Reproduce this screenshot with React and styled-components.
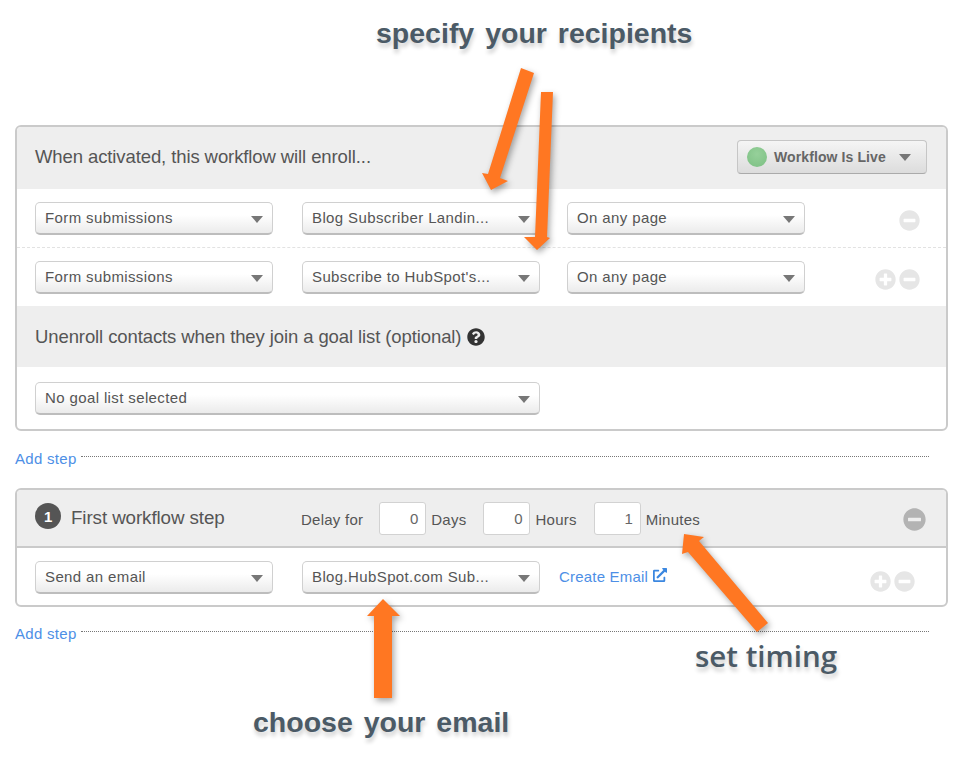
import React from 'react'
import styled, { createGlobalStyle } from 'styled-components'
import { FaMinusCircle, FaPlusCircle, FaQuestionCircle, FaExternalLinkAlt } from 'react-icons/fa'

const GlobalStyle = createGlobalStyle`
  html, body {
    margin: 0;
    padding: 0;
    background: #fff;
  }
  body {
    font-family: "Liberation Sans", Arial, sans-serif;
    color: #555;
  }
`

const Page = styled.div`
  position: relative;
  width: 962px;
  height: 773px;
  padding: 125px 14px 0 15px;
  box-sizing: border-box;
  overflow: hidden;
`

const Card = styled.div`
  border: 2px solid #cacaca;
  border-radius: 6px;
  overflow: hidden;
  background: #fff;
`

const Band = styled.div`
  display: flex;
  align-items: center;
  justify-content: space-between;
  height: ${({ $height }) => $height}px;
  padding: 0 19px ${({ $bottom }) => $bottom ?? 2}px 18px;
  box-sizing: border-box;
  background: #eee;
  font-size: 18.5px;
  letter-spacing: -0.1px;
  color: #555;
`

const BandTitle = styled.div`
  display: flex;
  align-items: center;
  gap: 6px;
`

const LiveButton = styled.div`
  display: flex;
  align-items: center;
  width: 190px;
  height: 34px;
  padding: 0 15px 0 9px;
  box-sizing: border-box;
  border: 1px solid #c6c6c6;
  border-bottom-color: #aaa;
  border-radius: 4px;
  background: linear-gradient(#f5f5f5, #dcdcdc);
  font-size: 14px;
  font-weight: bold;
  letter-spacing: 0.1px;
  color: #666;
`

const LiveDot = styled.span`
  width: 20px;
  height: 20px;
  margin-right: 7px;
  border-radius: 50%;
  background: radial-gradient(circle at 50% 35%, #96d09a, #7cc083);
`

const Row = styled.div`
  display: grid;
  grid-template-columns: ${({ $columns }) => $columns || '267px 265px 238px 1fr'};
  align-items: center;
  padding: 13px 0 ${({ $bottom }) => $bottom || 12}px 18px;
  border-bottom: ${({ $divider }) => ($divider ? '1px dashed #e2e2e2' : 'none')};
  height: 33px;
  box-sizing: content-box;
`

const SingleRow = styled.div`
  padding: 15px 0 14px 18px;
`

const Dropdown = styled.div`
  position: relative;
  width: ${({ $width }) => $width || 238}px;
  height: 33px;
  padding: 0 28px 0 9px;
  box-sizing: border-box;
  border: 1px solid #d0d0d0;
  border-bottom: 2px solid #bdbdbd;
  border-radius: 5px;
  background: linear-gradient(#fff 40%, #ebebeb);
  font-size: 15px;
  line-height: 30px;
  letter-spacing: 0.38px;
  color: #555;
  white-space: nowrap;
  overflow: hidden;
`

const Caret = styled.span`
  display: inline-block;
  width: 0;
  height: 0;
  border-left: 6px solid transparent;
  border-right: 6px solid transparent;
  border-top: 7px solid #777;
`

const DropdownCaret = styled(Caret)`
  position: absolute;
  top: 13px;
  right: 9px;
`

const LiveCaret = styled(Caret)`
  margin-left: auto;
`

const RoundIcons = styled.div`
  display: flex;
  justify-content: flex-end;
  gap: 3px;
  margin-top: ${({ $drop }) => $drop}px;
  padding-right: ${({ $inset }) => $inset}px;
  color: #e6e6e6;
  font-size: 21px;
  line-height: 0;
`

const AddStep = styled.div`
  display: flex;
  align-items: center;
  height: 20px;
  margin: ${({ $top }) => $top}px 0 ${({ $bottom }) => $bottom}px;
  padding-right: 19px;
  font-size: 15px;
  letter-spacing: 0.3px;
  color: #4d8fe6;
`

const DottedLine = styled.span`
  flex: 1;
  margin: -4px 0 0 4px;
  border-top: 1px dotted #777;
`

const StepBadge = styled.span`
  display: flex;
  align-items: center;
  justify-content: center;
  width: 26px;
  height: 26px;
  margin: -4px 10px 0 0;
  border-radius: 50%;
  background: #555;
  color: #fff;
  font-size: 15px;
  font-weight: bold;
`

const StepHeader = styled(Band)`
  justify-content: flex-start;
  border-bottom: 2px solid #cacaca;
`

const StepTitle = styled.span`
  width: 230px;
  font-size: 18.8px;
`

const DelayLabel = styled.span`
  margin: 2px ${({ $gap }) => $gap || 0}px 0 0;
  font-size: 15px;
  letter-spacing: 0.25px;
`

const DelayInput = styled.span`
  width: 47px;
  height: 33px;
  margin-right: 5px;
  padding-right: 7px;
  box-sizing: border-box;
  border: 1px solid #d2d2d2;
  border-radius: 3px;
  background: #fff;
  font-size: 15px;
  line-height: 31px;
  text-align: right;
  color: #666;
`

const StepRemove = styled.span`
  margin: 2px 1px 0 auto;
  color: #b3b3b3;
  font-size: 23px;
  line-height: 0;
`

const CreateEmail = styled.a`
  display: flex;
  align-items: center;
  gap: 5px;
  margin-top: -2px;
  font-size: 15px;
  letter-spacing: 0.2px;
  color: #4d8fe6;
  svg {
    width: 14px;
    height: 14px;
    margin-top: -3px;
    color: #3b87e0;
  }
`

const ArrowLayer = styled.svg`
  position: absolute;
  top: 0;
  left: 0;
  pointer-events: none;
  filter: drop-shadow(2px 3px 3px rgba(0, 0, 0, 0.35));
`

const Callout = styled.div`
  position: absolute;
  left: ${({ $left }) => $left}px;
  top: ${({ $top }) => $top}px;
  font-size: ${({ $size }) => $size}px;
  font-weight: ${({ $weight }) => $weight || 'bold'};
  font-family: ${({ $font }) => $font || '"Liberation Sans", Arial, sans-serif'};
  word-spacing: ${({ $words }) => $words || 0}px;
  line-height: 1;
  white-space: nowrap;
  color: #4b5a66;
  text-shadow: 1px 4px 4px rgba(0, 0, 0, 0.2);
`

const arrows = [
  '521,68 534,73 500,178 508,181 491,190 482,173 488,174',
  '541,92 553,92 547,237 550,238 537,250 524,237 535,237',
  '768,623 757,632 688,552 682,554 684,534 704,537 699,541',
  '374,698 374,616 367,616 383,599 400,616 392,616 392,698',
]

function Select({ label, width }) {
  return (
    <Dropdown $width={width}>
      {label}
      <DropdownCaret />
    </Dropdown>
  )
}

export default function App() {
  return (
    <Page>
      <GlobalStyle />
      <Card>
        <Band $height={62}>
          <BandTitle>When activated, this workflow will enroll...</BandTitle>
          <LiveButton>
            <LiveDot />
            Workflow Is Live
            <LiveCaret />
          </LiveButton>
        </Band>
        <Row $divider>
          <Select label="Form submissions" />
          <Select label="Blog Subscriber Landin..." />
          <Select label="On any page" />
          <RoundIcons $inset={26} $drop={4}>
            <FaMinusCircle />
          </RoundIcons>
        </Row>
        <Row>
          <Select label="Form submissions" />
          <Select label="Subscribe to HubSpot's..." />
          <Select label="On any page" />
          <RoundIcons $inset={26} $drop={4}>
            <FaPlusCircle />
            <FaMinusCircle />
          </RoundIcons>
        </Row>
        <Band $height={61} $bottom={0}>
          <BandTitle>
            Unenroll contacts when they join a goal list (optional)
            <FaQuestionCircle color="#333" size={18} />
          </BandTitle>
        </Band>
        <SingleRow>
          <Select label="No goal list selected" width={505} />
        </SingleRow>
      </Card>
      <AddStep $top={17} $bottom={20}>
        Add step
        <DottedLine />
      </AddStep>
      <Card>
        <StepHeader $height={58} $bottom={0}>
          <StepBadge>1</StepBadge>
          <StepTitle>First workflow step</StepTitle>
          <DelayLabel $gap={16}>Delay for</DelayLabel>
          <DelayInput>0</DelayInput>
          <DelayLabel $gap={17}>Days</DelayLabel>
          <DelayInput>0</DelayInput>
          <DelayLabel $gap={17}>Hours</DelayLabel>
          <DelayInput>1</DelayInput>
          <DelayLabel>Minutes</DelayLabel>
          <StepRemove>
            <FaMinusCircle />
          </StepRemove>
        </StepHeader>
        <Row $columns="267px 257px auto 1fr" $bottom={11}>
          <Select label="Send an email" />
          <Select label="Blog.HubSpot.com Sub..." />
          <CreateEmail>
            Create Email
            <FaExternalLinkAlt />
          </CreateEmail>
          <RoundIcons $inset={31} $drop={8}>
            <FaPlusCircle />
            <FaMinusCircle />
          </RoundIcons>
        </Row>
      </Card>
      <AddStep $top={16} $bottom={0}>
        Add step
        <DottedLine />
      </AddStep>
      <ArrowLayer width="962" height="773" viewBox="0 0 962 773">
        {arrows.map((points) => (
          <polygon key={points} points={points} fill="#ff7722" />
        ))}
      </ArrowLayer>
      <Callout $left={376} $top={19} $size={28.5} $words={3}>
        specify your recipients
      </Callout>
      <Callout $left={695} $top={641} $size={29.5} $weight={600} $font={'"Open Sans", sans-serif'}>
        set timing
      </Callout>
      <Callout $left={253} $top={708} $size={28.5} $words={3}>
        choose your email
      </Callout>
    </Page>
  )
}
